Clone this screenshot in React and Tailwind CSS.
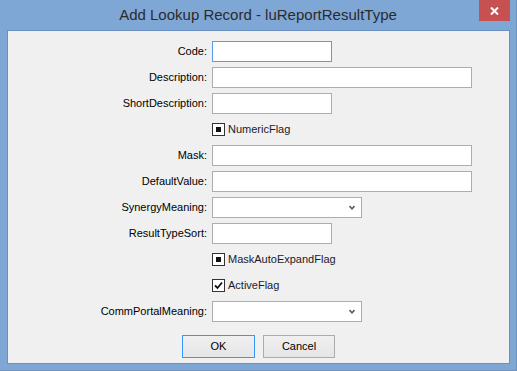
import React from 'react'

const font = { fontFamily: '"Liberation Sans", Arial, sans-serif' }

function TextRow({ label, width, focused }) {
    return (
        <div className="flex items-center h-[21px]">
            <div className="w-[199px] text-right text-[11px] text-[#000]">{label}</div>
            <div className={`ml-[5px] h-[21px] bg-white border ${focused ? 'border-[#569de5]' : 'border-[#abadb3]'} ${width}`}></div>
        </div>
    )
}

function SelectRow({ label }) {
    return (
        <div className="flex items-center h-[21px]">
            <div className="w-[199px] text-right text-[11px] text-[#000]">{label}</div>
            <div className="ml-[5px] h-[21px] w-[150px] bg-white border border-[#abadb3] flex items-center justify-end pr-[6px]">
                <svg width="6" height="5" viewBox="0 0 6 5">
                    <path d="M0.5 1 L3 3.8 L5.5 1" fill="none" stroke="#606060" strokeWidth="1.7" />
                </svg>
            </div>
        </div>
    )
}

function CheckRow({ label, checked }) {
    return (
        <div className="flex items-center h-[21px] pl-[204px]">
            <div className="w-[13px] h-[13px] bg-white border border-[#333] flex items-center justify-center">
                {checked ? (
                    <svg width="9" height="9" viewBox="0 0 9 9">
                        <path d="M1 4.5 L3.5 7 L8 1.5" fill="none" stroke="#111" strokeWidth="1.8" />
                    </svg>
                ) : (
                    <div className="w-[5px] h-[5px] bg-[#111]"></div>
                )}
            </div>
            <span className="ml-[3px] text-[11px] text-[#1a1a2e]">{label}</span>
        </div>
    )
}

export default function App() {
    return (
        <div className="w-[517px] h-[371px] bg-[#7fa7d6] flex flex-col border-r border-b border-[#6f93c0]" style={font}>
            {/* title bar */}
            <div className="h-[30px] flex relative">
                <div className="flex-1 flex items-center justify-center pt-[1px] text-[15px] text-[#2b2b2b]">
                    Add Lookup Record - luReportResultType
                </div>
                <div className="absolute left-[479px] top-0 w-[31px] h-[21px] bg-[#c75050] flex items-center justify-center">
                    <svg width="9" height="8" viewBox="0 0 9 8">
                        <path d="M1 0.5 L8 7.5 M8 0.5 L1 7.5" stroke="#fff" strokeWidth="2" />
                    </svg>
                </div>
            </div>

            {/* client area */}
            <div className="ml-[7px] w-[503px] h-[334px] border border-[#6b8fbf] bg-[#f0f0f0] flex flex-col pt-[10px]">
                <div className="flex flex-col gap-[5px]">
                    <TextRow label="Code:" width="w-[120px]" focused />
                    <TextRow label="Description:" width="w-[260px]" />
                    <TextRow label="ShortDescription:" width="w-[120px]" />
                    <CheckRow label="NumericFlag" />
                    <TextRow label="Mask:" width="w-[260px]" />
                    <TextRow label="DefaultValue:" width="w-[260px]" />
                    <SelectRow label="SynergyMeaning:" />
                    <TextRow label="ResultTypeSort:" width="w-[120px]" />
                    <CheckRow label="MaskAutoExpandFlag" />
                    <CheckRow label="ActiveFlag" checked />
                    <SelectRow label="CommPortalMeaning:" />
                </div>

                {/* buttons */}
                <div className="flex justify-center gap-[8px] mt-[13px]">
                    <button className="w-[73px] h-[23px] border border-[#3399ff] bg-gradient-to-b from-[#f0f0f0] to-[#e5e5e5] text-[11px] text-[#000]">OK</button>
                    <button className="w-[72px] h-[23px] border border-[#acacac] bg-gradient-to-b from-[#f0f0f0] to-[#e5e5e5] text-[11px] text-[#000]">Cancel</button>
                </div>
            </div>
        </div>
    )
}
